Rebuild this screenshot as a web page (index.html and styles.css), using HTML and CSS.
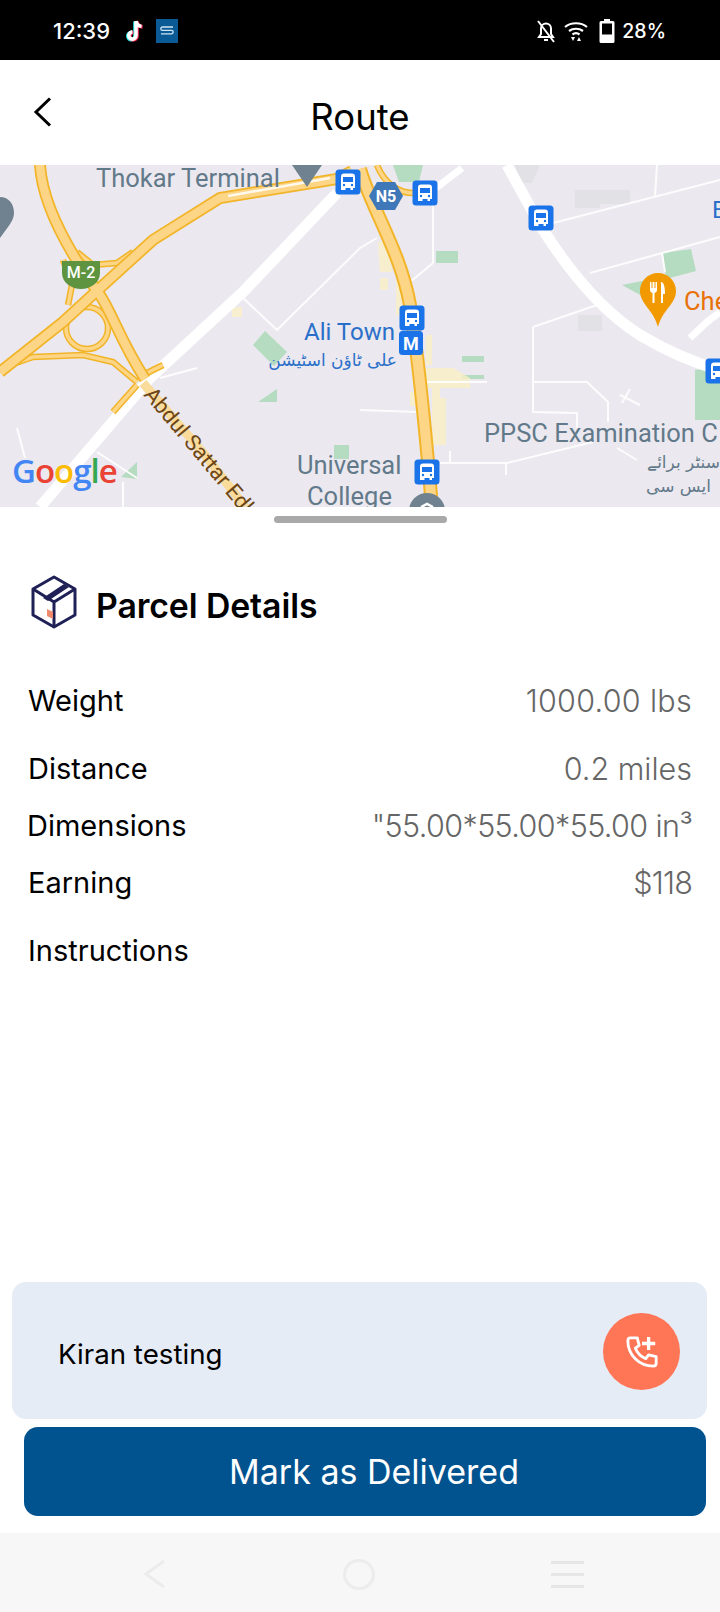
FILE: index.html
```html
<!DOCTYPE html>
<html lang="en">
<head>
<meta charset="utf-8">
<title>Route</title>
<link rel="stylesheet" href="styles.css">
</head>
<body>
<div class="app">
  <div class="status">
    <div class="status-left">
      <span class="time">12:39</span>
      <svg class="ic-tiktok" viewBox="0 0 22 24"><path class="tt-c" d="M13 2v14.500a3.600 3.600 0 1 1-3.600-3.600" transform="translate(-1 .6)"/><path class="tt-r" d="M13 2v14.500a3.600 3.600 0 1 1-3.600-3.600M13 2c.4 3 2.500 5 5.500 5.300" transform="translate(1 .6)"/><path class="tt-w" d="M13 2v14.500a3.600 3.600 0 1 1-3.600-3.600M13 2c.4 3 2.500 5 5.500 5.300"/></svg>
      <svg class="ic-s" viewBox="0 0 22 24"><rect width="22" height="24" fill="#0a5a96"/><path d="M17 8H6.500a1.600 1.600 0 0 0 0 3.400h9a1.600 1.600 0 0 1 0 3.400H5" fill="none" stroke="#cfe6f5" stroke-width="1.300"/></svg>
    </div>
    <div class="status-right">
      <svg class="ic-bell" viewBox="0 0 22 24"><path d="M4 18h14l-2-3V9.500a5 5 0 0 0-10 0V15zM9 21h4M3 2l16 21" fill="none" stroke="#fff" stroke-width="2"/></svg>
      <svg class="ic-wifi" viewBox="0 0 24 24"><path d="M1 8c6-5 16-5 22 0M5 12c4-3 10-3 14 0M8.500 15.500c2-1.500 5-1.500 7 0" fill="none" stroke="#fff" stroke-width="2.200"/><path d="M7 18h4l-2 4zM13 22h4l-2-4z" fill="#fff"/></svg>
      <svg class="ic-batt" viewBox="0 0 16 24"><path d="M5 0h6v2h3a1.500 1.500 0 0 1 1.500 1.500v19A1.500 1.500 0 0 1 14 24H2a1.500 1.500 0 0 1-1.500-1.500v-19A1.500 1.500 0 0 1 2 2h3z" fill="#fff"/><rect x="3" y="4.500" width="10" height="11" fill="#000"/></svg>
      <span class="pct">28%</span>
    </div>
  </div>

  <header class="bar">
    <svg class="back" viewBox="0 0 20 30"><path d="M17 1.500 3 15l14 13.500" fill="none" stroke="#000" stroke-width="3"/></svg>
    <h1 class="bar-title">Route</h1>
  </header>

  <svg class="map" viewBox="0 0 720 342">
    <defs>
      <g id="bus">
        <rect x="-12.500" y="-12.500" width="25" height="25" rx="3.500" fill="#1a73e8"/>
        <path d="M-7 -5.500a3 3 0 0 1 3-3h8a3 3 0 0 1 3 3V6h-2v2h-2.500V6h-5v2H-7z" fill="#fff"/>
        <rect x="-5" y="-5" width="10" height="5" fill="#1a73e8"/>
        <circle cx="-4" cy="3" r="1.200" fill="#1a73e8"/><circle cx="4" cy="3" r="1.200" fill="#1a73e8"/>
      </g>
    </defs>
    <rect class="m-bg" width="720" height="342"/>

    <g class="m-grey-blocks">
      <path d="M515 0h25l-8 18h-12z"/>
      <path d="M575 25h25v18h-25zM600 25h30v14h-30zM578 150h24v16h-24z"/>
    </g>

    <g class="m-park">
      <path d="M253 180l12-14 22 21-13 14z"/>
      <path d="M258 237l19-13v13z"/>
      <path d="M334 280h15v14h-15z"/>
      <path d="M121 312l16-15v17z"/>
      <path d="M436 86h22v12h-22z"/>
      <path d="M393 0h30l-4 17h-20z"/>
      <path d="M462 191h22v6h-22z"/>
      <path d="M462 210h22v4h-22z"/>
      <path d="M663 88l28-4 5 22-30 8z"/>
      <path d="M622 120l30-6 10 28z"/>
      <path d="M695 205l25-4v54h-25z"/>
    </g>
    <g class="m-urban">
      <path d="M378 77h10l4 30h-12z"/>
      <path d="M380 113h8v12h-8z"/>
      <path d="M396 115h6v35h-6z"/>
      <path d="M426 170h6v30h-6z"/>
      <path d="M423 203h30l17 10v10h-30v10h-8v-10h-9z"/>
      <path d="M410 227h6v14h-6z"/>
      <path d="M432 233h14v47h-14z"/>
      <path d="M232 142h10v10h-10z"/>
    </g>

    <g class="m-street">
      <path d="M243 133 277 165 360 83 377 73M160 213 197 203M17 263 25 293M97 287 137 313M123 317V342"/>
      <path d="M433 40V98L410 117M423 217H487M360 245 418 247M440 298H507L593 277M533 162 597 140M533 162V247L577 248V263M533 217H587L608 237V257"/>
      <path d="M553 58 720 15M590 108 720 72M657 0 655 32M662 88 665 107M620 230 640 240M630 224 622 238M617 283 637 295M450 286V298M506 298V310"/>
    </g>

    <path class="m-road-w" d="M337 28 243 127 150 213 40 342"/>
    <path class="m-road-w" d="M507 0 540 60C565 100 600 145 640 170 665 185 695 198 720 205"/>
    <path class="m-road-w2" d="M690 173 707 157 720 147"/>
    <path class="m-road-w2" d="M436 23 462 3"/>
    <path class="m-road-lite" d="M143 218 205 290 245 342"/>

    <g class="m-ramp-o">
      <path d="M10 200 33 192 83 190 113 197 137 217"/>
      <path d="M63 95 72 120 68 140"/>
      <path d="M77 87 93 100 117 98 133 87"/>
      <path d="M113 247 137 220M147 208 163 200"/>
      <path d="M377 0C385 20 400 28 413 28"/>
      <circle cx="87" cy="163" r="21"/>
    </g>
    <g class="m-ramp-i">
      <path d="M10 200 33 192 83 190 113 197 137 217"/>
      <path d="M63 95 72 120 68 140"/>
      <path d="M77 87 93 100 117 98 133 87"/>
      <path d="M113 247 137 220M147 208 163 200"/>
      <path d="M377 0C385 20 400 28 413 28"/>
      <circle cx="87" cy="163" r="21"/>
    </g>
    <g class="m-ic-o">
      <path d="M40 0C42 33 60 75 100 130 113 150 120 175 145 214"/>
      <path d="M0 207 63 157 100 123 153 75 220 33 337 14 352 6"/>
    </g>
    <g class="m-ic-i">
      <path d="M40 0C42 33 60 75 100 130 113 150 120 175 145 214"/>
      <path d="M0 207 63 157 100 123 153 75 220 33 337 14 352 6"/>
    </g>
    <path class="m-hw-o" d="M360 4C372 45 400 85 410 140 418 190 425 260 432 342"/>
    <path class="m-hw-i" d="M360 4C372 45 400 85 410 140 418 190 425 260 432 342"/>
    <path class="m-hw-high" d="M228 31 330 13"/>

    <path class="m-pin" d="M292 0h30l-15 22z"/>
    <path class="m-pin" d="M0 32c8 0 14 6 14 16 0 8-7 15-14 25z"/>
    <circle class="m-pin" cx="427" cy="346" r="18"/>
    <path class="m-chev" d="M421 342l6-3 6 3"/>
    <path class="m-shield" d="M62 96h38v12c0 10-10 16-19 16s-19-6-19-16z"/>
    <text class="m-shield-t" x="81" y="113">M-2</text>
    <path class="m-hex" d="M369 31l8-14h18l8 14-8 14h-18z"/>
    <text class="m-hex-t" x="386" y="37">N5</text>

    <use href="#bus" x="348" y="17"/>
    <use href="#bus" x="425" y="28"/>
    <use href="#bus" x="541" y="53"/>
    <use href="#bus" x="412" y="153"/>
    <rect class="m-metro" x="399" y="166" width="24" height="24" rx="3.500"/>
    <text class="m-metro-t" x="411" y="185">M</text>
    <use href="#bus" x="427" y="307"/>
    <use href="#bus" x="718" y="206"/>

    <path class="m-food" d="M658 108c-10 0-18 8-18 18 0 13 13 18 18 36 5-18 18-23 18-36 0-10-8-18-18-18z"/>
    <path class="m-fork" d="M650 117v8a3 3 0 0 0 2.500 3v10h2v-10a3 3 0 0 0 2.500-3v-8h-1.500v6h-1v-6h-2v6h-1v-6zM661 117c3 0 4 5 4 12h-2v9h-2z"/>

    <text class="m-l m-lg m-grey" x="96" y="22">Thokar Terminal</text>
    <text class="m-l m-blue" x="304" y="175">Ali Town</text>
    <text class="m-ur m-blue" x="397" y="201" direction="rtl">علی ٹاؤن اسٹیشن</text>
    <text class="m-l m-lg m-grey" x="297" y="309">Universal</text>
    <text class="m-l m-lg m-grey" x="307" y="340">College</text>
    <text class="m-l m-lg m-grey" x="484" y="277">PPSC Examination C</text>
    <text class="m-ur m-grey" x="720" y="303" direction="rtl">سنٹر برائے</text>
    <text class="m-ur m-grey" x="711" y="327" direction="rtl">ایس سی</text>
    <text class="m-l m-lg m-orange" x="684" y="145">Che</text>
    <text class="m-l m-blue" x="712" y="53">B</text>
    <text class="m-road-t" transform="translate(143 230) rotate(50)">Abdul Sattar Edhi Rd</text>
    <text class="m-google" x="12" y="318"><tspan fill="#4285f4">G</tspan><tspan fill="#ea4335">o</tspan><tspan fill="#fbbc05">o</tspan><tspan fill="#4285f4">g</tspan><tspan fill="#34a853">l</tspan><tspan fill="#ea4335">e</tspan></text>
  </svg>

  <div class="handle"></div>

  <section class="details">
    <div class="title-row">
      <svg class="ic-box" viewBox="0 0 46 54">
        <path d="M23 2 44 14V40L23 52 2 40V14Z" fill="#fff" stroke="#1e2056" stroke-width="3" stroke-linejoin="round"/>
        <path d="M2 14 23 27 44 14M23 27V52" fill="none" stroke="#1e2056" stroke-width="3"/>
        <path d="M12 23 33 9l5 3-21 14z" fill="#1e2056"/>
        <path d="M16 41l6 3v-7l-6-3z" fill="#f08a6e"/>
      </svg>
      <h2 class="title">Parcel Details</h2>
    </div>
    <div class="row"><span class="k">Weight</span><span class="v v-open">1000.00 lbs</span></div>
    <div class="row row-wide"><span class="k">Distance</span><span class="v">0.2 miles</span></div>
    <div class="row"><span class="k k-dim">Dimensions</span><span class="v v-tight">"55.00*55.00*55.00 in³</span></div>
    <div class="row"><span class="k">Earning</span><span class="v v-short">$118</span></div>
    <div class="row row-wide"><span class="k">Instructions</span></div>
  </section>

  <div class="contact">
    <span class="contact-name">Kiran testing</span>
    <div class="call">
      <svg class="ic-call" viewBox="0 0 36 36"><path d="M6 3h7l2 8-4 3c2 5 6 9 11 11l3-4 8 2v7c0 2-1 3-3 3C15 33 3 21 3 6c0-2 1-3 3-3z" fill="none" stroke="#fff" stroke-width="3" stroke-linejoin="round"/><path d="M25 2v14M18 9h14" stroke="#fff" stroke-width="3.500"/></svg>
    </div>
  </div>
  <button class="deliver">Mark as Delivered</button>

  <nav class="nav">
    <svg class="nav-back" viewBox="0 0 24 28"><path d="M21 1 3 14l18 13" fill="none" stroke="#ececec" stroke-width="3"/></svg>
    <div class="nav-home"></div>
    <div class="nav-menu"><i></i><i></i><i></i></div>
  </nav>
</div>
</body>
</html>
```
FILE: styles.css
```css
* { box-sizing: border-box; }
html, body { margin: 0; padding: 0; background: #fff; }
.app {
  width: 720px; height: 1612px; display: flex; flex-direction: column;
  font-family: "Inter", "Liberation Sans", sans-serif; color: #000; overflow: hidden;
}

/* status bar */
.status {
  height: 60px; background: #000; color: #fff; display: flex;
  justify-content: space-between; align-items: center;
  padding: 2px 54px 0 53px; font-weight: 500;
}
.status-left, .status-right { display: flex; align-items: center; }
.time { margin-right: 13px; font-size: 22px; }
.pct { font-size: 19.500px; }
.ic-tiktok { width: 22px; height: 24px; margin-right: 11px; }
.tt-c, .tt-r, .tt-w { fill: none; stroke-width: 3.600; }
.tt-c { stroke: #25f4ee; } .tt-r { stroke: #fe2c55; } .tt-w { stroke: #fff; }
.ic-s { width: 22px; height: 24px; }
.ic-bell { width: 22px; height: 24px; margin-right: 7px; }
.ic-wifi { width: 24px; height: 24px; margin-right: 11px; }
.ic-batt { width: 16px; height: 24px; margin-right: 7px; }

/* header */
.bar { height: 105px; position: relative; display: flex; align-items: center; justify-content: center; flex: none; }
.bar-title { margin: 0; font-weight: 400; font-size: 36.500px; line-height: 1; padding-top: 9px; }
.back { position: absolute; left: 33px; top: 37px; width: 20px; height: 30px; }

/* map */
.map { display: block; width: 720px; height: 342px; flex: none; font-family: "Roboto", sans-serif; }
.m-bg { fill: #ebe9ef; }
.m-grey-blocks { fill: #e2e1e6; }
.m-park { fill: #a8dab5; opacity: .8; }
.m-urban { fill: #fbf0c4; opacity: .75; }
.m-street { fill: none; stroke: #fff; stroke-width: 2; opacity: .9; }
.m-road-w { fill: none; stroke: #fff; stroke-width: 11; }
.m-road-w2 { fill: none; stroke: #fff; stroke-width: 7; }
.m-road-lite { fill: none; stroke: #f9dc9c; stroke-width: 9; }
.m-hw-o { fill: none; stroke: #f2b429; stroke-width: 14; }
.m-hw-i { fill: none; stroke: #fdd586; stroke-width: 10; }
.m-ic-o path { fill: none; stroke: #f2b429; stroke-width: 12; }
.m-ic-i path { fill: none; stroke: #fdd586; stroke-width: 8.500; }
.m-ramp-o > * { fill: none; stroke: #f2b429; stroke-width: 6.500; }
.m-ramp-i > * { fill: none; stroke: #fdd586; stroke-width: 3.500; }
.m-hw-high { fill: none; stroke: #fff; stroke-width: 2.500; opacity: .85; }
.m-pin { fill: #70828f; }
.m-chev { fill: none; stroke: #fff; stroke-width: 2.500; }
.m-shield { fill: #5e9440; }
.m-shield-t { font-size: 16px; font-weight: 500; fill: #fff; text-anchor: middle; }
.m-hex { fill: #3f78b8; }
.m-hex-t { font-size: 16px; font-weight: 700; fill: #fff; text-anchor: middle; }
.m-metro { fill: #1a73e8; }
.m-metro-t { font-size: 18px; font-weight: 700; fill: #fff; text-anchor: middle; }
.m-food { fill: #f29900; }
.m-fork { fill: #fff; }
.m-l { font-size: 24px; }
.m-lg { font-size: 25.500px; }
.m-ur { font-family: "DejaVu Sans", sans-serif; font-size: 17px; }
.m-grey { fill: #62798a; }
.m-blue { fill: #2a6fc9; }
.m-orange { fill: #e8710a; }
.m-road-t { font-size: 22px; fill: #6e4514; }
.m-google { font-family: "Open Sans", sans-serif; font-size: 33px; font-weight: 600; letter-spacing: -1px; }

/* handle */
.handle { width: 173px; height: 7px; border-radius: 4px; background: #a9a9a9; margin: 9px auto 0; flex: none; }

/* details */
.details { padding: 52px 28px 0; flex: 1; }
.title-row { display: flex; align-items: center; height: 54px; margin: 0 0 52px 3px; }
.ic-box { width: 46px; height: 54px; margin-right: 19px; }
.title { margin: 0; font-size: 33.800px; font-weight: 600; line-height: 54px; padding-top: 8px; letter-spacing: -.1px; }
.row { display: flex; justify-content: space-between; height: 40px; line-height: 40px; font-size: 29px; margin-top: 17px; }
.title-row + .row { margin-top: 0; }
.row-wide { margin-top: 28px; }
.k-dim { margin-left: -1px; }
.v { color: #666; font-weight: 300; font-size: 30.500px; }
.v-open { letter-spacing: .3px; }
.v-tight { letter-spacing: -.6px; }
.v-short { letter-spacing: -.8px; }

/* contact */
.contact {
  height: 137px; margin: 0 13px 0 12px; background: #e6ecf5; border-radius: 14px;
  display: flex; align-items: center; justify-content: space-between; padding: 0 27px 0 46px; flex: none;
}
.contact-name { font-size: 27.700px; padding-top: 7px; }
.call { width: 77px; height: 77px; border-radius: 50%; background: #ff7657; display: flex; align-items: center; justify-content: center; margin-top: 2px; }
.ic-call { width: 34px; height: 34px; }

.deliver {
  display: block; flex: none; height: 89px; margin: 8px 14px 0 24px; width: 682px;
  background: #01538f; color: #fff; border: 0; border-radius: 14px;
  font-family: inherit; font-size: 34px; padding: 0 0 0 18px;
}

/* nav */
.nav { height: 79px; margin-top: 17px; padding: 3px 136px 0 143px; background: #f7f7f7; flex: none; display: flex; align-items: center; justify-content: space-between; }
.nav-back { width: 24px; height: 28px; }
.nav-home { width: 32px; height: 31px; border: 3px solid #ececec; border-radius: 50%; }
.nav-menu { width: 33px; display: flex; flex-direction: column; gap: 9px; }
.nav-menu i { display: block; height: 3px; background: #e6e6e6; }
```
